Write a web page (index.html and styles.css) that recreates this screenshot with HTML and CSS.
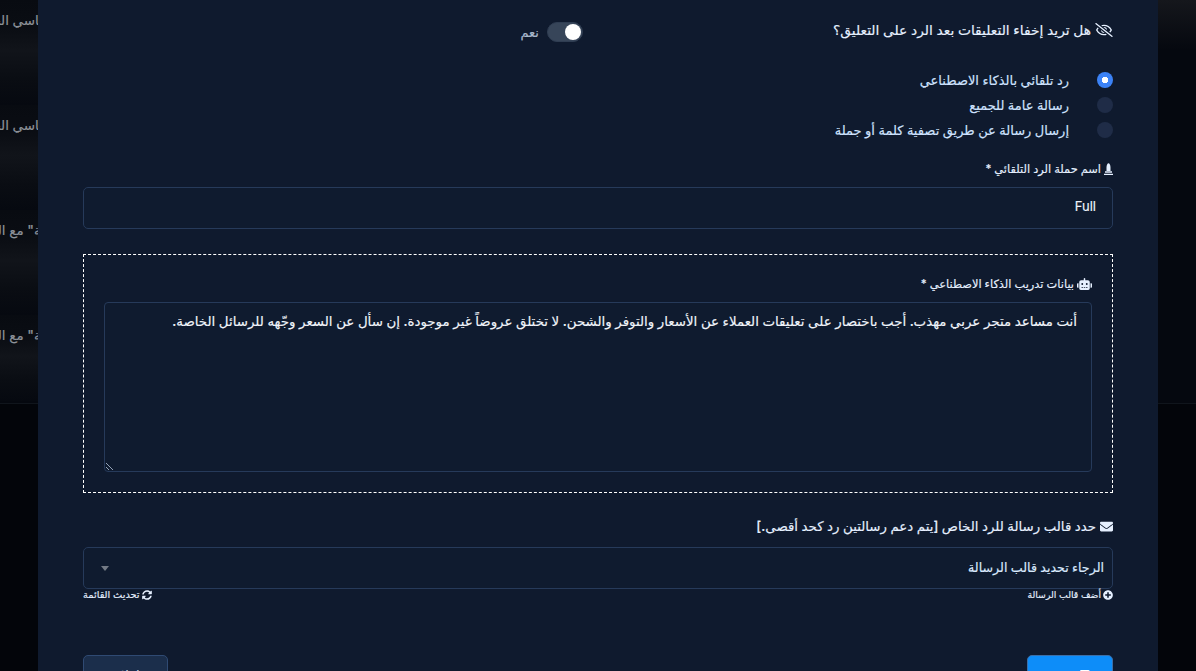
FILE: index.html
```html
<!DOCTYPE html>
<html lang="ar" dir="rtl">
<head>
<meta charset="utf-8">
<title>الرد التلقائي</title>
<link rel="stylesheet" href="styles.css">
</head>
<body>
<main class="page">
  <div class="bg-rows">
    <div class="bg-row">الأساسي الجديد</div>
    <div class="bg-row">الأساسي الجديد</div>
    <div class="bg-row bg-row-quote">الحملة" مع البيانات</div>
    <div class="bg-row bg-row-quote bg-row-last">الحملة" مع البيانات</div>
  </div>
  <div class="bg-foot"></div>
</main>
<section class="modal">
  <div class="toggle-row">
    <div class="label-strong">
      <svg class="ico ico-eye" viewBox="0 0 640 512"><path d="M634 471L36 3.51A16 16 0 0 0 13.51 6l-10 12.49A16 16 0 0 0 6 41l598 467.49a16 16 0 0 0 22.49-2.49l10-12.49A16 16 0 0 0 634 471zM296.79 146.47l134.79 105.38C429.36 191.91 380.48 144 320 144a112.26 112.26 0 0 0-23.21 2.47zm46.42 219.07L208.42 260.16C210.65 320.09 259.53 368 320 368a113 113 0 0 0 23.21-2.46zM320 112c98.65 0 189.09 55 237.93 144a285.53 285.53 0 0 1-44 60.2l37.74 29.5a333.7 333.7 0 0 0 52.9-75.11 32.35 32.35 0 0 0 0-29.19C550.29 135.59 442.93 64 320 64c-36.7 0-71.71 7-104.63 18.81l46.41 36.29c18.94-4.3 38.34-7.1 58.22-7.1zm0 288c-98.65 0-189.08-55-237.93-144a285.47 285.47 0 0 1 44.05-60.19l-37.74-29.5a333.6 333.6 0 0 0-52.89 75.1 32.35 32.35 0 0 0 0 29.19C89.72 376.41 197.08 448 320 448c36.7 0 71.71-7.05 104.63-18.81l-46.41-36.28C359.28 397.2 339.89 400 320 400z"/></svg>
      <span class="size-top">هل تريد إخفاء التعليقات بعد الرد على التعليق؟</span>
    </div>
    <div class="toggle-wrap">
      <span class="toggle"><span class="knob"></span></span>
      <span class="toggle-text">نعم</span>
    </div>
  </div>

  <div class="radios">
    <div class="radio-row"><span class="radio on"></span><span>رد تلقائي بالذكاء الاصطناعي</span></div>
    <div class="radio-row"><span class="radio"></span><span>رسالة عامة للجميع</span></div>
    <div class="radio-row"><span class="radio"></span><span>إرسال رسالة عن طريق تصفية كلمة أو جملة</span></div>
  </div>

  <div class="label-small camp-label">
    <svg class="ico ico-stamp" viewBox="0 0 9 12"><path d="M2.500 8V4.500C2.500 2 3.500.300 4.500.300S6.500 2 6.500 4.500V8zM1 8.300h7v1.500H1zM0 10.800h9V12H0z"/></svg>
    <span>اسم حملة الرد التلقائي *</span>
  </div>
  <div class="field field-input">Full</div>

  <div class="ai-box">
    <div class="label-small ai-label">
      <svg class="ico ico-robot" viewBox="0 0 640 512"><path d="M32,224H64V416H32A31.96166,31.96166,0,0,1,0,384V256A31.96166,31.96166,0,0,1,32,224Zm512-48V448a64.06328,64.06328,0,0,1-64,64H160a64.06328,64.06328,0,0,1-64-64V176a79.974,79.974,0,0,1,80-80H288V32a32,32,0,0,1,64,0V96H464A79.974,79.974,0,0,1,544,176ZM264,256a40,40,0,1,0-40,40A39.997,39.997,0,0,0,264,256Zm-8,128H192v32h64Zm96,0H288v32h64ZM456,256a40,40,0,1,0-40,40A39.997,39.997,0,0,0,456,256Zm-8,128H384v32h64ZM640,256V384a31.96166,31.96166,0,0,1-32,32H576V224h32A31.96166,31.96166,0,0,1,640,256Z"/></svg>
      <span>بيانات تدريب الذكاء الاصطناعي *</span>
    </div>
    <div class="textarea">أنت مساعد متجر عربي مهذب. أجب باختصار على تعليقات العملاء عن الأسعار والتوفر والشحن. لا تختلق عروضاً غير موجودة. إن سأل عن السعر وجّهه للرسائل الخاصة.
      <svg class="grip" viewBox="0 0 9 9"><path d="M1 1l7 7M1 5l3 3"/></svg>
    </div>
  </div>

  <div class="label-strong tpl-label">
    <svg class="ico ico-env" viewBox="0 0 512 512"><path d="M502.3 190.8c3.9-3.1 9.7-.2 9.7 4.7V400c0 26.5-21.5 48-48 48H48c-26.5 0-48-21.5-48-48V195.6c0-5 5.7-7.8 9.7-4.7 22.4 17.4 52.1 39.5 154.1 113.6 21.1 15.4 56.7 47.8 92.2 47.6 35.7.3 72-32.8 92.3-47.6 102-74.1 131.6-96.3 154-113.7zM256 320c23.2.4 56.6-29.2 73.4-41.4 132.7-96.3 142.8-104.7 173.4-128.7 5.8-4.5 9.2-11.5 9.2-18.9v-19c0-26.5-21.5-48-48-48H48C21.5 64 0 85.5 0 112v19c0 7.4 3.4 14.3 9.2 18.9 30.6 23.9 40.7 32.4 173.4 128.7 16.8 12.2 50.2 41.8 73.4 41.4z"/></svg>
    <span class="size-tpl">حدد قالب رسالة للرد الخاص [يتم دعم رسالتين رد كحد أقصى.]</span>
  </div>
  <div class="field field-select">
    <span>الرجاء تحديد قالب الرسالة</span>
    <span class="caret"></span>
  </div>
  <div class="links">
    <a class="link link-add"><svg class="ico ico-link" viewBox="0 0 512 512"><path d="M256 8C119 8 8 119 8 256s111 248 248 248 248-111 248-248S393 8 256 8zm144 276c0 6.6-5.4 12-12 12h-92v92c0 6.6-5.4 12-12 12h-56c-6.6 0-12-5.4-12-12v-92h-92c-6.600 0-12-5.400-12-12v-56c0-6.600 5.400-12 12-12h92v-92c0-6.600 5.400-12 12-12h56c6.600 0 12 5.400 12 12v92h92c6.600 0 12 5.400 12 12v56z"/></svg><span>أضف قالب الرسالة</span></a>
    <a class="link link-sync"><svg class="ico ico-link" viewBox="0 0 512 512"><path d="M370.72 133.28C339.458 104.008 298.888 87.962 255.848 88c-77.458.068-144.328 53.178-162.791 126.85-1.344 5.363-6.122 9.15-11.651 9.15H24.103c-7.498 0-13.194-6.807-11.807-14.176C33.933 94.924 134.813 8 256 8c66.448 0 126.791 26.136 171.315 68.685L463.03 40.97C478.149 25.851 504 36.559 504 57.941V192c0 13.255-10.745 24-24 24H345.941c-21.382 0-32.09-25.851-16.971-40.971l41.75-41.749zM32 296h134.059c21.382 0 32.09 25.851 16.971 40.971l-41.75 41.75c31.262 29.273 71.835 45.319 114.876 45.28 77.418-.07 144.315-53.144 162.787-126.849 1.344-5.363 6.122-9.15 11.651-9.15h57.304c7.498 0 13.194 6.807 11.807 14.176C478.067 417.076 377.187 504 256 504c-66.448 0-126.791-26.136-171.315-68.685L48.97 471.03C33.851 486.149 8 475.441 8 454.059V320c0-13.255 10.745-24 24-24z"/></svg><span>تحديث القائمة</span></a>
  </div>
  <div class="actions">
    <button class="btn btn-primary"><svg class="ico ico-save" viewBox="0 0 448 512"><path d="M433.900 129.900l-83.900-83.900A48 48 0 0 0 316.100 32H48C21.500 32 0 53.500 0 80v352c0 26.500 21.500 48 48 48h352c26.500 0 48-21.500 48-48V163.900a48 48 0 0 0-14.100-34zM224 416c-35.300 0-64-28.700-64-64s28.700-64 64-64 64 28.700 64 64-28.700 64-64 64zm96-304.500V212c0 6.600-5.400 12-12 12H76c-6.600 0-12-5.400-12-12V108c0-6.600 5.400-12 12-12h228.500c3.200 0 6.200 1.300 8.500 3.500l3.500 3.500c2.200 2.300 3.500 5.300 3.500 8.500z"/></svg><span>حفظ</span></button>
    <button class="btn btn-ghost">إغلاق</button>
  </div>
</section>
</body>
</html>
```
FILE: styles.css
```css
* { box-sizing: border-box; }
html, body { margin: 0; height: 671px; overflow: hidden; background: #05080f; }
body {
  font-family: Inter, "DejaVu Sans", sans-serif;
  font-size: 13px;
  color: #e8f0fc;
  position: relative;
  width: 1196px;
}
.page { height: 671px; width: 1196px; }
.bg-rows {
  height: 404px;
  overflow: hidden;
  border-bottom: 1px solid #10151c;
  background: linear-gradient(180deg, #15171c, #05080f) right top / 38px 50px no-repeat, #05080f;
}
.bg-row {
  height: 105px;
  padding: 12px 1134px 0 0;
  white-space: nowrap;
  font-size: 13.5px;
  font-weight: 500;
  color: #8d9299;
  -webkit-text-stroke: 0.15px #8d9299;
  background: linear-gradient(180deg, #080b11 0%, #0a0d13 25%, #11141a 48%, #0a0d13 75%, #060910 100%) left top / 38px 100% no-repeat;
}
.bg-row-quote { padding-right: 1126px; }
.bg-row-last { height: 86px; }
.bg-foot { height: 267px; background: #03050a; }

.modal {
  position: absolute;
  top: 0;
  left: 38px;
  width: 1120px;
  height: 671px;
  padding: 20px 45px 0;
  background: #0f1a2e;
  overflow: hidden;
  -webkit-text-stroke: 0.15px currentColor;
}
.ico { fill: currentColor; flex: none; display: block; }
.toggle-row { display: flex; align-items: center; height: 20px; }
.label-strong { display: flex; align-items: center; gap: 4px; font-size: 13px; font-weight: 500; color: #e6f0ff; line-height: 20px; }
.size-top { font-size: 13.8px; }
.size-tpl { font-size: 13.33px; }
.ico-eye { width: 18px; height: 14px; }
.toggle-wrap { display: flex; align-items: center; gap: 8px; margin-right: 250px; margin-top: 4px; }
.toggle {
  width: 36px; height: 20px; border-radius: 10px; background: #374559;
  border: 1px solid #2f3d52;
  padding: 1px; display: flex; justify-content: flex-start;
}
.knob { width: 16px; height: 16px; border-radius: 50%; background: #fff; }
.toggle-text { font-size: 13px; line-height: 16px; color: #a9b8cc; }
.radios { display: flex; flex-direction: column; margin-top: 27px; }
.radio-row { display: flex; align-items: center; gap: 28px; height: 25.4px; font-size: 13px; color: #cfe3ff; font-weight: 500; }
.radio { width: 16px; height: 16px; border-radius: 50%; background: #1f2c47; flex: none; }
.radio.on { background: radial-gradient(circle, #fff 0 3px, #3b82f6 3.5px); }
.label-small { display: flex; align-items: center; gap: 3px; font-size: 11.4px; font-weight: 500; color: #e6f0ff; line-height: 16px; }
.ico-stamp { width: 9px; height: 12px; }
.camp-label { margin-top: 18px; }
.field {
  height: 42px; border: 1px solid #263a5a; border-radius: 5px; background: #0f1b2f;
  display: flex; align-items: center;
}
.field-input { margin-top: 10px; padding: 0 16px 4px; font-size: 13px; color: #eef3fb; }
.ai-box { margin-top: 25px; height: 239px; border: 1px dashed #fff; padding: 21px 20px 0; }
.ico-robot { width: 15px; height: 12px; }
.ai-label { height: 16px; }
.textarea {
  position: relative;
  margin-top: 10px; height: 170px; border: 1px solid #263a5a; border-radius: 4px; background: #0f1b2f;
  padding: 8px 14px; font-size: 13.38px; line-height: 20px; font-weight: 500; color: #f1f5fb;
}
.grip { position: absolute; left: 0; bottom: 0; width: 9px; height: 9px; stroke: #94a3b8; stroke-width: 1; fill: none; }
.ico-env { width: 13px; height: 13px; }
.tpl-label { margin-top: 23px; }
.field-select { margin-top: 11px; padding: 0 8px 2px 17px; justify-content: space-between; font-size: 12.63px; font-weight: 500; color: #dbeafe; }
.caret { border: 4px solid transparent; border-top: 5px solid #737a85; border-bottom: 0; margin-top: 2px; }
.links { display: flex; justify-content: space-between; margin-top: -1px; }
.link { display: flex; align-items: center; gap: 2px; color: #e6f0ff; line-height: 14px; }
.link-add { font-size: 9.3px; }
.link-sync { font-size: 9.8px; }
.ico-link { width: 10px; height: 10px; }
.actions { display: flex; justify-content: space-between; margin-top: 53px; }
.btn {
  height: 44px; border-radius: 5px; font: inherit; padding: 12px 0 0;
  display: flex; justify-content: center; align-items: flex-start; gap: 6px;
}
.btn-primary { width: 86px; background: #0d8df9; border: 1px solid #3c6fa8; color: #fff; }
.btn-ghost { width: 85px; background: #1b2e4b; border: 1px solid #2f4a73; color: #cbd5e1; padding-top: 11px; }
.ico-save { width: 12px; height: 14px; margin-top: 1px; }
```
